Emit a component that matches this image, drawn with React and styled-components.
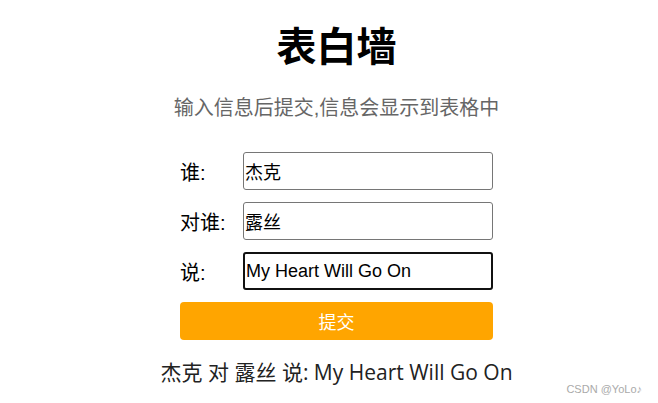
import React, { useState } from "react";
import styled, { createGlobalStyle } from "styled-components";

const GlobalStyle = createGlobalStyle`
  html, body {
    margin: 0;
    padding: 0;
    background: #fff;
    font-family: "Liberation Sans", "Noto Sans CJK SC", sans-serif;
  }
`;

const Page = styled.div`
  position: relative;
  width: 658px;
  height: 403px;
  box-sizing: border-box;
  padding-left: 15px;
  overflow: hidden;
`;

const Container = styled.div`
  width: 313px;
  margin: 0 auto;
  display: flex;
  flex-direction: column;
  align-items: center;
`;

const Title = styled.h1`
  margin: 23px 0 0;
  font-size: 40px;
  line-height: 48px;
  font-weight: 700;
  color: #000;
  white-space: nowrap;
`;

const Subtitle = styled.p`
  margin: 23px 0 0;
  font-size: 20px;
  line-height: 28px;
  color: #666;
  white-space: nowrap;
`;

const Form = styled.div`
  margin-top: 30px;
  width: 100%;
  display: flex;
  flex-direction: column;
  gap: 12px;
`;

const Row = styled.div`
  display: flex;
  align-items: center;
  height: 38px;
`;

const Label = styled.span`
  width: 63px;
  font-size: 20px;
  color: #000;
`;

const Input = styled.input`
  width: 250px;
  height: 38px;
  box-sizing: border-box;
  padding: 0 1px;
  font-size: 18px;
  font-family: "Liberation Sans", "Noto Sans CJK SC", sans-serif;
  color: #000;
  border: ${(p) => (p.$focused ? "2px solid #111" : "1px solid #767676")};
  border-radius: 3px;
  outline: none;
`;

const Button = styled.button`
  width: 100%;
  height: 38px;
  border: none;
  border-radius: 4px;
  background: #ffa500;
  color: #fff;
  font-size: 18px;
  font-family: "Liberation Sans", "Noto Sans CJK SC", sans-serif;
  cursor: pointer;
`;

const Result = styled.div`
  margin-top: 18px;
  font-size: 21px;
  line-height: 28px;
  color: #222;
  white-space: nowrap;
  font-family: "Open Sans", "Noto Sans CJK SC", sans-serif;
`;

const Watermark = styled.div`
  position: absolute;
  right: 16px;
  bottom: 8px;
  font-size: 11px;
  color: #aaa;
  font-family: "Liberation Sans", sans-serif;
`;

function App() {
  const [from, setFrom] = useState("杰克");
  const [to, setTo] = useState("露丝");
  const [msg, setMsg] = useState("My Heart Will Go On");

  return (
    <Page>
      <GlobalStyle />
      <Container>
        <Title>表白墙</Title>
        <Subtitle>输入信息后提交,信息会显示到表格中</Subtitle>
        <Form>
          <Row>
            <Label>谁:</Label>
            <Input value={from} onChange={(e) => setFrom(e.target.value)} />
          </Row>
          <Row>
            <Label>对谁:</Label>
            <Input value={to} onChange={(e) => setTo(e.target.value)} />
          </Row>
          <Row>
            <Label>说:</Label>
            <Input $focused value={msg} onChange={(e) => setMsg(e.target.value)} />
          </Row>
          <Button>提交</Button>
        </Form>
        <Result>
          {from} 对 {to} 说: {msg}
        </Result>
      </Container>
      <Watermark>CSDN @YoLo♪</Watermark>
    </Page>
  );
}

export default App;
